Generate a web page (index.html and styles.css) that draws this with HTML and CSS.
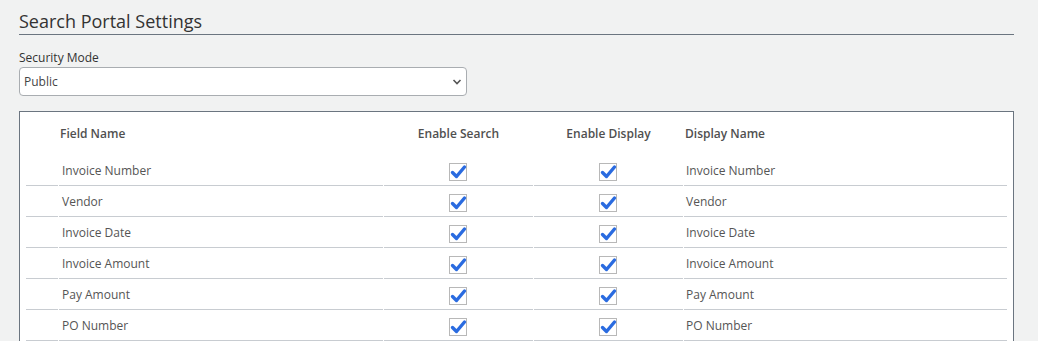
FILE: index.html
```html
<!DOCTYPE html>
<html lang="en">
<head>
  <meta charset="UTF-8" />
  <meta name="viewport" content="width=device-width, initial-scale=1.0" />
  <title>Search Portal Settings</title>
  <link rel="stylesheet" href="styles.css">
</head>
<body>
  <div class="page">
    <h1 class="page-title">Search Portal Settings</h1>

    <div class="field">
      <label for="securityMode">Security Mode</label>
      <div class="select-wrap">
        <select id="securityMode">
          <option>Public</option>
          <option>Private</option>
        </select>
        <svg class="chevron" width="10" height="6" viewBox="0 0 10 6"><path d="M1.5 1 L5 4.5 L8.5 1" fill="none" stroke="#555" stroke-width="1.6"/></svg>
      </div>
    </div>

    <div class="fields-box">
      <table class="fields">
        <colgroup>
          <col class="c-pad">
          <col class="c-name">
          <col class="c-check">
          <col class="c-check">
          <col>
        </colgroup>
        <thead>
          <tr>
            <th></th>
            <th>Field Name</th>
            <th class="center">Enable Search</th>
            <th class="center">Enable Display</th>
            <th>Display Name</th>
          </tr>
        </thead>
        <tbody id="rows"></tbody>
      </table>
    </div>
  </div>

  <script>
    const fields = ['Invoice Number', 'Vendor', 'Invoice Date', 'Invoice Amount', 'Pay Amount', 'PO Number'];
    const box = '<svg class="check" width="19" height="18" viewBox="0 0 19 18">' +
      '<rect x="0.5" y="0.5" width="17" height="17" fill="#fff" stroke="#b8b8b8"/>' +
      '<path d="M3.5 9.5 L7.5 13.5 L15.5 4" fill="none" stroke="#2a6be0" stroke-width="3.4" stroke-linecap="round" stroke-linejoin="round"/></svg>';
    const rows = document.getElementById('rows');
    fields.forEach(function (f) {
      const tr = document.createElement('tr');
      tr.innerHTML = '<td></td><td>' + f + '</td><td class="center">' + box +
        '</td><td class="center">' + box + '</td><td class="display">' + f + '</td>';
      rows.appendChild(tr);
    });
  </script>
</body>
</html>
```

FILE: styles.css
```css
body {
  margin: 0;
  background: #f1f2f2;
  font-family: 'Open Sans', 'Liberation Sans', sans-serif;
  color: #444;
}
.page {
  padding: 8px 24px 0 19px;
}
.page-title {
  margin: 0;
  font-size: 18px;
  font-weight: 400;
  color: #333;
  line-height: 26px;
  border-bottom: 1px solid #6b7580;
}
.field {
  margin-top: 15px;
}
.field label {
  display: block;
  font-size: 12px;
  color: #333;
  line-height: 16px;
  margin-bottom: 1px;
}
.select-wrap {
  position: relative;
  width: 448px;
}
.select-wrap select {
  width: 100%;
  height: 29px;
  appearance: none;
  -webkit-appearance: none;
  background: #fff;
  border: 1px solid #a9adb1;
  border-radius: 4px;
  font-family: inherit;
  font-size: 12px;
  color: #444;
  padding: 0 4px;
}
.chevron {
  position: absolute;
  right: 5px;
  top: 12px;
  pointer-events: none;
}
.fields-box {
  margin-top: 15px;
  background: #fff;
  border: 1px solid #6b7580;
  border-bottom: none;
  padding: 0 5px;
  height: 300px;
}
.fields {
  width: 100%;
  table-layout: fixed;
  border-collapse: separate;
  border-spacing: 1px 0;
  font-size: 12px;
}
.c-pad { width: 32px; }
.c-name { width: 324px; }
.c-check { width: 149px; }
.fields th {
  text-align: left;
  font-weight: 600;
  color: #505050;
  height: 43px;
  padding: 0 1px;
}
.fields td {
  height: 30px;
  padding: 0 3px;
  color: #555;
  border-bottom: 1px solid #c8ccd1;
}
.fields td:first-child {
  padding: 0;
}
.fields .center {
  text-align: center;
}
.fields td.display {
  padding-left: 2px;
}
.check {
  display: block;
  margin: 3px auto 0;
}
```
